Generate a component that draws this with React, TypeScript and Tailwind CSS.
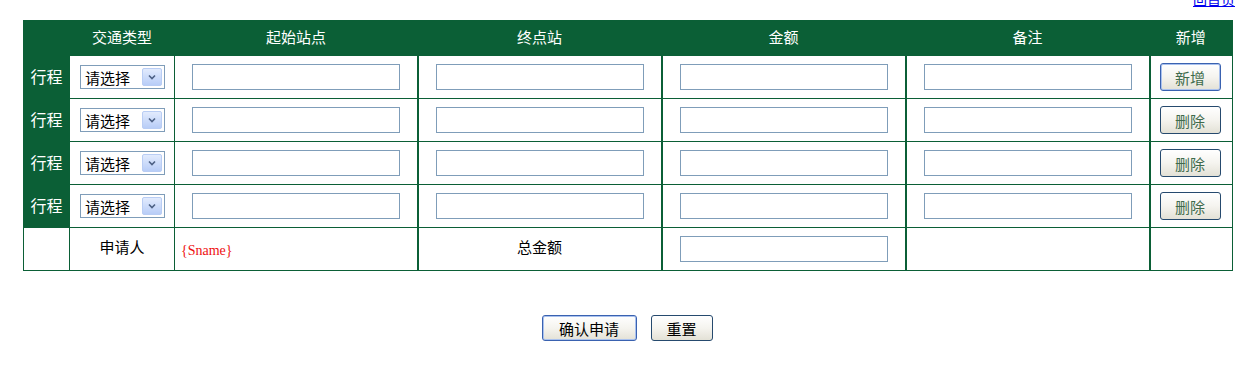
import React from "react";

const font = { fontFamily: '"Noto Sans CJK SC", "Noto Sans", sans-serif' };

function Picker() {
  return (
    <div className="flex h-[24px] w-[85px] items-center border border-[#7f9db9] bg-white pl-[4px] pr-[2px]">
      <span className="flex-1 text-[15px] leading-none text-black">请选择</span>
      <span className="flex h-[18px] w-[20px] items-center justify-center rounded-[2px] border border-[#b9cdf4] bg-gradient-to-b from-[#e2ebfd] to-[#b8cdf7]">
        <svg width="8" height="6" viewBox="0 0 8 6">
          <path d="M1 1.5 L4 4.5 L7 1.5" fill="none" stroke="#4d6185" strokeWidth="1.6" />
        </svg>
      </span>
    </div>
  );
}

function Field() {
  return <div className="h-[26px] w-[208px] border border-[#7f9db9] bg-white" />;
}

function Btn({ label, focus, dark }: { label: string; focus?: boolean; dark?: boolean }) {
  return (
    <button
      className={`flex h-full w-full items-center justify-center rounded-[3px] border bg-gradient-to-b from-[#ffffff] via-[#f5f4ef] to-[#e3e1d6] text-[15px] leading-none ${
        focus ? "border-[#3a62b0] shadow-[inset_0_0_0_1px_#a9c1ee]" : "border-[#264a6e]"
      } ${dark ? "text-black" : "text-[#3f6b4c]"}`}
      style={font}
    >
      {label}
    </button>
  );
}

function TripRow({ first }: { first?: boolean }) {
  return (
    <tr className="h-[43px] border-t border-[#0b5f36]">
      <td className="bg-[#0b5f36] pb-[2px] text-center text-[16px] text-white">行程</td>
      <td className="border-l border-[#0b5f36] pl-[10px]">
        <Picker />
      </td>
      {[0, 1, 2, 3].map((i) => (
        <td key={i} className={`${i === 0 ? "border-l" : "border-l-2"} border-[#0b5f36] pl-[17px]`}>
          <Field />
        </td>
      ))}
      <td className="border-l-2 border-[#0b5f36] pl-[9px]">
        <div className="h-[28px] w-[61px]">
          <Btn label={first ? "新增" : "删除"} focus={first} />
        </div>
      </td>
    </tr>
  );
}

export default function App() {
  const heads = ["", "交通类型", "起始站点", "终点站", "金额", "备注", "新增"];
  return (
    <div className="min-h-screen w-full bg-white" style={font}>
      <div className="flex h-[20px] justify-end overflow-hidden pr-[17px]">
        <a href="#" className="-mt-[11px] text-[14px] text-[#0000ee] underline">
          回首页
        </a>
      </div>
      <table className="ml-[23px] w-[1209px] table-fixed border-collapse border border-[#0b5f36]">
        <colgroup>
          <col className="w-[46px]" />
          <col className="w-[105px]" />
          <col className="w-[243px]" />
          <col className="w-[244px]" />
          <col className="w-[244px]" />
          <col className="w-[244px]" />
          <col className="w-[83px]" />
        </colgroup>
        <thead>
          <tr className="h-[35px] bg-[#0b5f36]">
            {heads.map((h, i) => (
              <th key={i} className="pb-[1px] text-center text-[15px] font-normal text-white">
                {h}
              </th>
            ))}
          </tr>
        </thead>
        <tbody>
          <TripRow first />
          <TripRow />
          <TripRow />
          <TripRow />
          <tr className="h-[43px] border-t border-[#0b5f36]">
            <td />
            <td className="border-l border-[#0b5f36] pb-[4px] text-center text-[15px] text-black">申请人</td>
            <td
              className="border-l border-[#0b5f36] pl-[6px] pt-[2px] text-[14px] text-[#ee1111]"
              style={{ fontFamily: '"Liberation Serif", serif' }}
            >
              {"{Sname}"}
            </td>
            <td className="border-l-2 border-[#0b5f36] pb-[4px] text-center text-[15px] text-black">总金额</td>
            <td className="border-l-2 border-[#0b5f36] pl-[17px]">
              <Field />
            </td>
            <td className="border-l-2 border-[#0b5f36]" />
            <td className="border-l-2 border-[#0b5f36]" />
          </tr>
        </tbody>
      </table>
      <div className="mt-[44px] flex justify-center gap-[14px] pl-[2px]">
        <div className="h-[26px] w-[95px]">
          <Btn label="确认申请" focus dark />
        </div>
        <div className="h-[26px] w-[62px]">
          <Btn label="重置" dark />
        </div>
      </div>
    </div>
  );
}
